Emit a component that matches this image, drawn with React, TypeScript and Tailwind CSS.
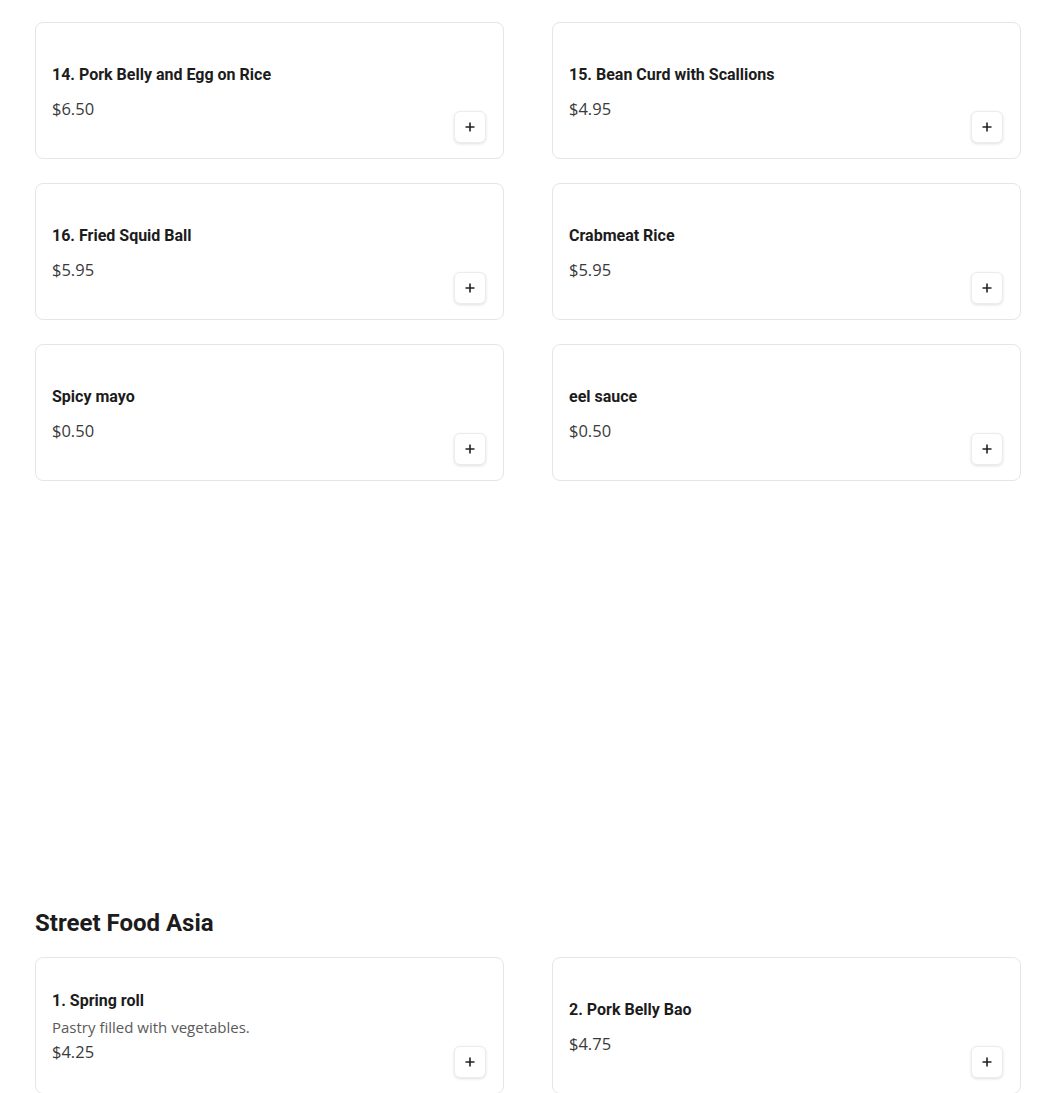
import React from "react";

type Item = { name: string; price: string; desc?: string };

const top: Item[] = [
  { name: "14. Pork Belly and Egg on Rice", price: "$6.50" },
  { name: "15. Bean Curd with Scallions", price: "$4.95" },
  { name: "16. Fried Squid Ball", price: "$5.95" },
  { name: "Crabmeat Rice", price: "$5.95" },
  { name: "Spicy mayo", price: "$0.50" },
  { name: "eel sauce", price: "$0.50" },
];

const street: Item[] = [
  { name: "1. Spring roll", price: "$4.25", desc: "Pastry filled with vegetables." },
  { name: "2. Pork Belly Bao", price: "$4.75" },
];

function Plus() {
  return (
    <svg width="10" height="10" viewBox="0 0 10 10" fill="none">
      <path d="M5 0.5V9.5M0.5 5H9.5" stroke="#222" strokeWidth="1.6" />
    </svg>
  );
}

function Card({ item }: { item: Item }) {
  return (
    <div className="h-[137px] rounded-lg border border-[#e6e6e6] bg-white flex pl-4 pr-[17px]">
      <div className={`flex-1 self-center flex flex-col ${item.desc ? "pt-[3px]" : "pt-[5px]"}`}>
        <div
          className={`text-[16px] leading-[20px] font-bold text-[#1c1c1c] ${item.desc ? "mb-[6px]" : "mb-[12px]"}`}
          style={{ fontFamily: "Roboto, sans-serif" }}
        >
          {item.name}
        </div>
        {item.desc && (
          <div
            className="text-[15px] leading-[20px] text-[#5a5a5a] mb-[3px]"
            style={{ fontFamily: "'Open Sans', sans-serif" }}
          >
            {item.desc}
          </div>
        )}
        <div
          className="text-[16.5px] leading-[24px] text-[#3a3a3a]"
          style={{ fontFamily: "'Open Sans', sans-serif" }}
        >
          {item.price}
        </div>
      </div>
      <div className="self-end mb-[15px]">
        <button className="w-[32px] h-[32px] rounded-md bg-white border border-[#ececec] shadow-[0_1px_3px_rgba(0,0,0,0.12)] flex items-center justify-center">
          <Plus />
        </button>
      </div>
    </div>
  );
}

export default function App() {
  return (
    <div className="bg-white min-h-[1093px] pl-[35px] pt-[22px]">
      <div className="w-[986px] grid grid-cols-2 gap-x-[48px] gap-y-[24px]">
        {top.map((it) => (
          <Card key={it.name} item={it} />
        ))}
      </div>
      <h2
        className="mt-[426px] text-[24px] leading-[32px] font-bold text-[#1c1c1c]"
        style={{ fontFamily: "Roboto, sans-serif" }}
      >
        Street Food Asia
      </h2>
      <div className="mt-[18px] w-[986px] grid grid-cols-2 gap-x-[48px] gap-y-[24px]">
        {street.map((it) => (
          <Card key={it.name} item={it} />
        ))}
      </div>
    </div>
  );
}
